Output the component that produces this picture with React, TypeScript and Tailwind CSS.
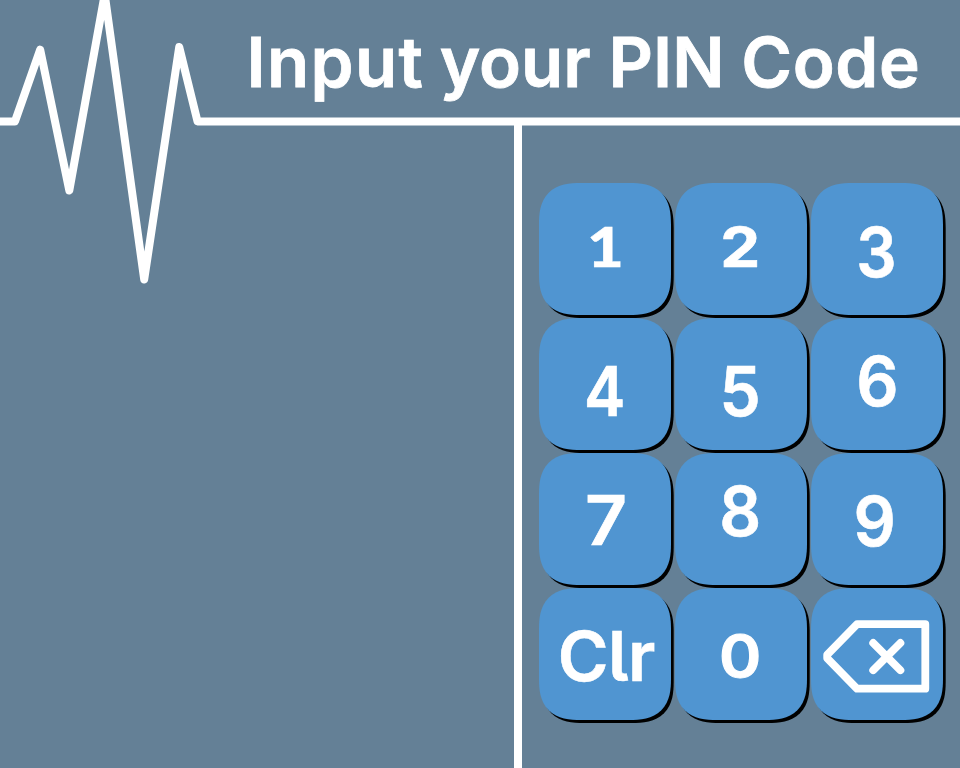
type Key = { label: string; style: string };

const KEYS: Key[] = [
  { label: "1", style: "font-['Lato',sans-serif] font-black translate-x-[0.4px] translate-y-[-8px] scale-x-[0.92] scale-y-[0.81]" },
  { label: "2", style: "font-bold translate-x-[-0.5px] translate-y-[-7px] scale-x-[0.92] scale-y-[0.8] [-webkit-text-stroke:0.8px_white]" },
  { label: "3", style: "translate-x-[-0.5px] translate-y-[2.5px] scale-x-[0.92]" },
  { label: "4", style: "translate-x-[-0.2px] translate-y-[6.5px] scale-x-[0.9]" },
  { label: "5", style: "translate-x-[-0.5px] translate-y-[7px] scale-x-[0.95]" },
  { label: "6", style: "translate-x-[0.3px] translate-y-[-3px] scale-x-[0.96]" },
  { label: "7", style: "translate-x-[1.2px] translate-y-[0.5px] scale-x-[1.06]" },
  { label: "8", style: "translate-x-[-0.8px] translate-y-[-8.5px] scale-x-[0.95]" },
  { label: "9", style: "translate-x-[-2.3px] translate-y-[1.5px] scale-x-[0.96]" },
  { label: "Clr", style: "translate-x-[1px] translate-y-[2px] [font-feature-settings:'cv05'] tracking-[-0.5px]" },
  { label: "0", style: "translate-x-[-0.5px] translate-y-[-2px] scale-x-[0.93] scale-y-[0.84] [-webkit-text-stroke:1.2px_white]" },
  { label: "Backspace", style: "" },
];

function Heartbeat() {
  return (
    <svg
      className="pointer-events-none absolute top-0 left-0"
      width="960"
      height="290"
      viewBox="0 0 960 290"
      fill="none"
      stroke="white"
      strokeWidth="8"
      strokeLinecap="round"
      strokeLinejoin="round"
    >
      <path d="M-5 121.4H15L40.2 49.7L69.3 190.5L104.7 -5.5L144.2 279.5L179.2 47L197.5 121.4H965" />
    </svg>
  );
}

function BackspaceIcon() {
  return (
    <svg
      width="132"
      height="131.5"
      viewBox="0 0 132 131.5"
      fill="none"
      stroke="white"
      strokeWidth="7.8"
      strokeLinecap="round"
      strokeLinejoin="round"
    >
      <path d="M46 36.2H114.3V100.7H46L16.2 70.2V66.8Z" />
      <path d="M62.2 55L89.4 82.2M89.4 55L62.2 82.2" />
    </svg>
  );
}

export default function App() {
  return (
    <div className="relative flex h-[768px] w-[960px] flex-col overflow-hidden bg-[#648096] font-['Inter',sans-serif] font-semibold text-white">
      <header className="h-[121px] shrink-0 pt-[27px] pl-[246.6px]">
        <h1 className="flex text-[69px] leading-[70px] whitespace-pre [-webkit-text-stroke:0.8px_white]">
          <span className="w-[193.2px] tracking-[1.35px]">Input </span>
          <span className="w-[168.8px]">your </span>
          <span className="w-[132.7px]">PIN </span>
          <span className="tracking-[0.6px]">Code</span>
        </h1>
      </header>
      <main className="flex flex-1">
        <section className="w-[514.2px] shrink-0" />
        <div className="w-[8px] shrink-0 bg-white" />
        <section className="pt-[62.4px] pl-[17.2px]">
          <div className="grid grid-cols-[repeat(3,132px)] grid-rows-[repeat(4,131.5px)] gap-x-[3.7px] gap-y-[3.5px]">
            {KEYS.map((key) => (
              <button
                key={key.label}
                aria-label={key.label}
                className="flex items-center justify-center rounded-[42px] bg-[#5095d1] shadow-[2.7px_3px_0_0_black] [corner-shape:superellipse(1.4)]"
              >
                {key.label === "Backspace" ? (
                  <BackspaceIcon />
                ) : (
                  <span
                    className={`block origin-[50%_60px] text-[69px] leading-[70px] [-webkit-text-stroke:0.6px_white] ${key.style}`}
                  >
                    {key.label}
                  </span>
                )}
              </button>
            ))}
          </div>
        </section>
      </main>
      <Heartbeat />
    </div>
  );
}
